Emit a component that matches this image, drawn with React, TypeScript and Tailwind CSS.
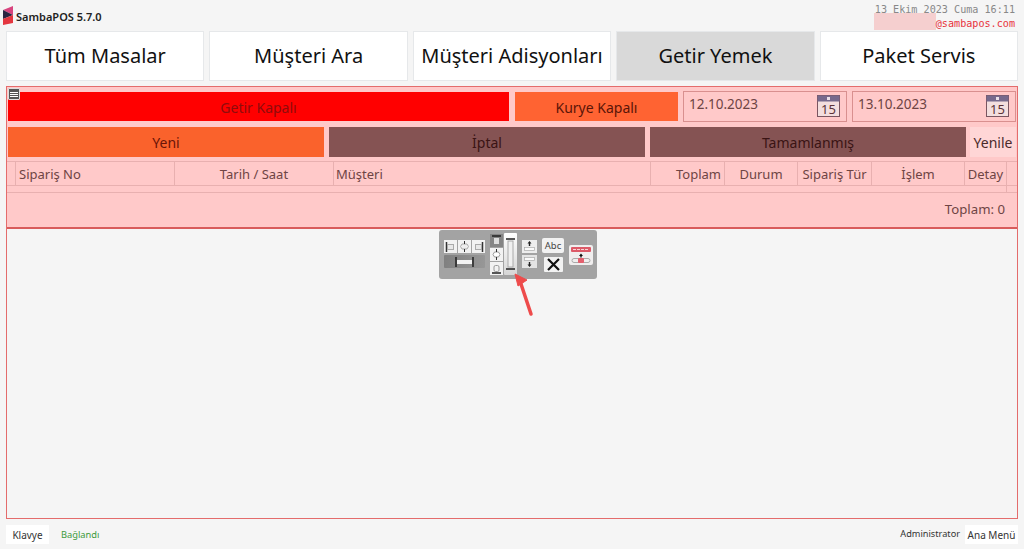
const font = "font-['Noto_Sans',sans-serif]";

function NavButton({ label, active }: { label: string; active?: boolean }) {
  return (
    <div
      className={`flex flex-1 items-center justify-center border border-[#e6e8ea] text-[20px] text-[#111] ${
        active ? "bg-[#d9d9d9]" : "bg-white"
      }`}
    >
      {label}
    </div>
  );
}

function CalendarIcon() {
  return (
    <svg width="23" height="22" viewBox="0 0 23 22">
      <rect x="0.5" y="0.5" width="22" height="21" fill="#f3dede" stroke="#7a5560" />
      <rect x="0.5" y="0.5" width="22" height="6" fill="#76698c" />
      <rect x="10" y="2" width="3" height="3" fill="#e8e0e8" />
      <text x="11.500" y="19" textAnchor="middle" fontSize="13" fill="#5a3338" fontFamily="Noto Sans">
        15
      </text>
    </svg>
  );
}

function DateBox({ value }: { value: string }) {
  return (
    <div className="flex h-[31px] w-[164px] items-center justify-between border border-[#d9908f] pb-[2px] pl-[5px] pr-[6px] text-[13.500px] text-[#6e4444]">
      <span className="pb-[2px]">{value}</span>
      <CalendarIcon />
    </div>
  );
}

function Tab({ label, className }: { label: string; className: string }) {
  return <div className={`flex h-[30px] w-[316px] items-center justify-center text-[14px] ${className}`}>{label}</div>;
}

function HeaderCell({ label, className }: { label?: string; className: string }) {
  return (
    <div className={`flex h-full shrink-0 items-center border-r border-[#e8b0b0] pt-[3px] text-[13px] text-[#6e4444] ${className}`}>
      {label}
    </div>
  );
}

function ToolButton({ className, children }: { className: string; children?: React.ReactNode }) {
  return <div className={`flex items-center justify-center ${className}`}>{children}</div>;
}

function Toolbar() {
  return (
    <div className="flex h-[49px] w-[158px] rounded-[3px] bg-[#a3a3a3] pl-[5px] pt-[3px]">
      <div className="mt-[7px] flex w-[41px] flex-col gap-[2px]">
        <div className="flex h-[13px] gap-px">
          <ToolButton className="w-[13px] bg-[#f2f2f2]">
            <svg width="11" height="10" viewBox="0 0 11 10">
              <path d="M1.500 0v10" stroke="#333" strokeWidth="1.500" />
              <rect x="2.500" y="2.500" width="6" height="5" fill="#e8e8e8" stroke="#aaa" />
            </svg>
          </ToolButton>
          <ToolButton className="w-[13px] bg-[#f2f2f2]">
            <svg width="11" height="11" viewBox="0 0 11 11">
              <path d="M3 3h5l1.500 2.500L8 8H3L1.500 5.500z" fill="#eee" stroke="#aaa" />
              <path d="M5.500 0v3M5.500 8v3" stroke="#333" />
            </svg>
          </ToolButton>
          <ToolButton className="w-[13px] bg-[#f2f2f2]">
            <svg width="11" height="10" viewBox="0 0 11 10">
              <path d="M9.500 0v10" stroke="#333" strokeWidth="1.500" />
              <rect x="2.500" y="2.500" width="6" height="5" fill="#e8e8e8" stroke="#aaa" />
            </svg>
          </ToolButton>
        </div>
        <ToolButton className="h-[13px] rounded-[1px] bg-[linear-gradient(90deg,#808080,#979797)]">
          <svg width="19" height="10" viewBox="0 0 19 10">
            <path d="M1 0v10M18 0v10" stroke="#222" strokeWidth="1.500" />
            <rect x="2" y="3" width="15" height="4" fill="#f2f2f2" />
          </svg>
        </ToolButton>
      </div>
      <div className="ml-[5px] mt-px flex w-[13px] flex-col gap-px">
        <ToolButton className="h-[13px] bg-[#858585]">
          <svg width="11" height="11" viewBox="0 0 11 11">
            <path d="M1 1h9" stroke="#222" strokeWidth="1.500" />
            <rect x="3" y="3" width="5" height="6" fill="#ddd" />
          </svg>
        </ToolButton>
        <ToolButton className="h-[13px] bg-[#f2f2f2]">
          <svg width="11" height="11" viewBox="0 0 11 11">
            <path d="M3.500 3h4L9 5.500 7.500 8h-4L2 5.500z" fill="#fff" stroke="#999" />
            <path d="M5.500 0v3M5.500 8v3" stroke="#333" />
          </svg>
        </ToolButton>
        <ToolButton className="h-[13px] bg-[#f2f2f2]">
          <svg width="11" height="11" viewBox="0 0 11 11">
            <rect x="3" y="2.500" width="5" height="6" rx="1.500" fill="#f2f2f2" stroke="#999" />
            <path d="M1 10h9" stroke="#222" strokeWidth="1.500" />
          </svg>
        </ToolButton>
      </div>
      <ToolButton className="ml-px h-[42px] w-[13px] rounded-[1px] bg-[linear-gradient(180deg,#ffffff,#d6d6d6)]">
        <svg width="11" height="32" viewBox="0 0 11 32">
          <path d="M1 1h9M1 31h9" stroke="#222" strokeWidth="1.500" />
          <rect x="3" y="3" width="5" height="26" fill="#f0f0f0" stroke="#aaa" />
        </svg>
      </ToolButton>
      <div className="ml-[5px] mt-[7px] flex w-[15px] flex-col gap-[2px]">
        <ToolButton className="h-[13px] bg-[#ededed]">
          <svg width="13" height="11" viewBox="0 0 13 11">
            <path d="M6.500 0l2 2.500H7.200V5H5.800V2.500H4.500z" fill="#222" />
            <rect x="1.500" y="6.500" width="10" height="3" fill="#fafafa" stroke="#aaa" strokeWidth="0.700" />
          </svg>
        </ToolButton>
        <ToolButton className="h-[13px] bg-[#e4e4e4]">
          <svg width="13" height="11" viewBox="0 0 13 11">
            <rect x="1.500" y="1.500" width="10" height="3" fill="#fafafa" stroke="#aaa" strokeWidth="0.700" />
            <path d="M6.500 11l2-2.500H7.200V6H5.800v2.500H4.500z" fill="#222" />
          </svg>
        </ToolButton>
      </div>
      <div className="ml-[5px] mt-[5px] flex w-[22px] flex-col items-center gap-[4px]">
        <ToolButton className="h-[15px] w-[22px] rounded-[2px] bg-[#f2f2f2] text-[9.500px] leading-none text-[#444]">Abc</ToolButton>
        <ToolButton className="h-[15px] w-[19px] rounded-[1px] bg-[#f2f2f2]">
          <svg width="15" height="13" viewBox="0 0 15 13">
            <path d="M2 1l11 11M13 1L2 12" stroke="#111" strokeWidth="2.200" />
          </svg>
        </ToolButton>
      </div>
      <ToolButton className="ml-[5px] mt-[12px] h-[20px] w-[24px] rounded-[2px] bg-[#f0eeee]">
        <svg width="22" height="18" viewBox="0 0 22 18">
          <rect x="1" y="1" width="20" height="5" rx="1" fill="#dc5a68" />
          <path d="M3 3.500h16" stroke="#f8d4d4" strokeDasharray="3 1" />
          <path d="M11 7.500l2 2.500h-1.300v1.500h-1.400V10H9z" fill="#111" />
          <rect x="2" y="12.500" width="18" height="4" rx="2" fill="none" stroke="#aaa" />
          <rect x="8" y="12" width="6" height="5" rx="1" fill="#e4606e" />
        </svg>
      </ToolButton>
    </div>
  );
}

export default function App() {
  return (
    <div className={`flex h-[549px] w-[1024px] flex-col overflow-hidden bg-[#f5f5f5] px-[6px] ${font}`}>
      {/* Title bar */}
      <div className="flex h-[31px] shrink-0 justify-between">
        <div className="-ml-[3px] mt-[6px] flex items-start gap-[3px]">
          <svg width="10" height="19" viewBox="0 0 10 19">
            <path d="M0 4L10 0v9z" fill="#d8447e" />
            <path d="M0 4l10 5-10 4z" fill="#2a2440" />
            <path d="M0 13l10-4v8l-10 2z" fill="#e4363f" />
          </svg>
          <span className="mt-[3px] text-[11px] font-semibold leading-[16px] text-[#222]">SambaPOS 5.7.0</span>
        </div>
        <div className="mr-[3px] mt-[3px] flex flex-col items-end font-['DejaVu_Sans_Mono',monospace] text-[10.150px] leading-[13px]">
          <span className="text-[#888]">13 Ekim 2023 Cuma 16:11</span>
          <div className="flex h-[14px] items-end">
            <span className="h-[17px] w-[62px] bg-[#f5cfcf]" />
            <span className="text-[#e8323c]">@sambapos.com</span>
          </div>
        </div>
      </div>

      {/* Main navigation */}
      <div className="flex h-[50px] shrink-0 gap-[5px]">
        <NavButton label="Tüm Masalar" />
        <NavButton label="Müşteri Ara" />
        <NavButton label="Müşteri Adisyonları" />
        <NavButton label="Getir Yemek" active />
        <NavButton label="Paket Servis" />
      </div>

      {/* Delivery panel */}
      <div className="mt-[5px] flex h-[433px] shrink-0 flex-col border border-[#e46c6c]">
        <div className="relative flex h-[142px] shrink-0 flex-col border-b-[2px] border-[#d85c5c] bg-[#ffc9c9]">
          <div className="absolute left-px top-px flex h-[12px] w-[12px] flex-col justify-center gap-px rounded-[1px] border border-[#ddd] bg-[#555] px-px">
            <span className="h-px bg-white" />
            <span className="h-px bg-white" />
            <span className="h-px bg-white" />
          </div>
          <div className="ml-px mt-[4px] flex h-[31px] items-center">
            <div className="flex h-[29px] w-[501px] items-center justify-center bg-[#ff0000] pt-[2px] text-[14px] text-[#8f0c0c]">
              Getir Kapalı
            </div>
            <div className="ml-[6px] flex h-[29px] w-[163px] items-center justify-center bg-[#ff6332] pt-[2px] text-[14px] text-[#5a1508]">
              Kurye Kapalı
            </div>
            <div className="ml-[5px] flex gap-[5px]">
              <DateBox value="12.10.2023" />
              <DateBox value="13.10.2023" />
            </div>
          </div>
          <div className="ml-px mt-[5px] flex h-[30px] items-center gap-[5px]">
            <Tab label="Yeni" className="bg-[#fa622c] text-[#6a1408]" />
            <Tab label="İptal" className="bg-[#855353] text-[#3a1414]" />
            <Tab label="Tamamlanmış" className="bg-[#855353] text-[#3a1414]" />
            <div className="-ml-px flex h-[30px] w-[46px] items-center justify-center bg-[#ffd6d6] text-[14px] text-[#4a2a2a]">
              Yenile
            </div>
          </div>
          <div className="mt-[4px] flex h-[25px] shrink-0 border-y border-[#e8b0b0]">
            <HeaderCell className="w-[9px]" />
            <HeaderCell label="Sipariş No" className="w-[159px] pl-[3px]" />
            <HeaderCell label="Tarih / Saat" className="w-[159px] justify-center" />
            <HeaderCell label="Müşteri" className="w-[317px] pl-[2px]" />
            <HeaderCell label="Toplam" className="w-[74px] justify-end pr-[3px]" />
            <HeaderCell label="Durum" className="w-[73px] justify-center" />
            <HeaderCell label="Sipariş Tür" className="w-[74px] justify-center" />
            <HeaderCell label="İşlem" className="w-[93px] justify-center" />
            <HeaderCell label="Detay" className="w-[42px] justify-center" />
          </div>
          <div className="flex h-[7px] shrink-0 justify-end border-b border-[#e8b0b0]">
            <div className="w-[11px] border-l border-[#e8b0b0]" />
          </div>
          <div className="flex flex-1 items-center justify-end pr-[12px] text-[13.200px] text-[#6e4444]">Toplam: 0</div>
        </div>
        <div className="relative flex flex-1 bg-[#f5f5f5] pl-[432px] pt-px">
          <Toolbar />
          {/* Callout arrow */}
          <svg className="absolute left-[503px] top-[44px]" width="24" height="44" viewBox="0 0 24 44">
            <path d="M21 41L10 8" stroke="#ee4b4b" strokeWidth="3.500" strokeLinecap="round" />
            <path d="M5 1l12 6-9 6z" fill="#ee4b4b" stroke="#ee4b4b" strokeLinejoin="round" />
          </svg>
        </div>
      </div>

      {/* Status bar */}
      <div className="mt-[6px] flex h-[19px] shrink-0 items-center justify-between">
        <div className="flex items-center">
          <div className="flex h-[19px] w-[43px] items-center justify-center bg-white pt-px text-[10px] text-[#333]">Klavye</div>
          <span className="ml-[12px] text-[9.300px] text-[#3c9a3c]">Bağlandı</span>
        </div>
        <div className="flex items-center">
          <span className="-mt-[2px] text-[9.200px] text-[#333]">Administrator</span>
          <div className="ml-[5px] flex h-[19px] w-[53px] items-center justify-center bg-white pt-px text-[10px] text-[#333]">
            Ana Menü
          </div>
        </div>
      </div>
    </div>
  );
}
